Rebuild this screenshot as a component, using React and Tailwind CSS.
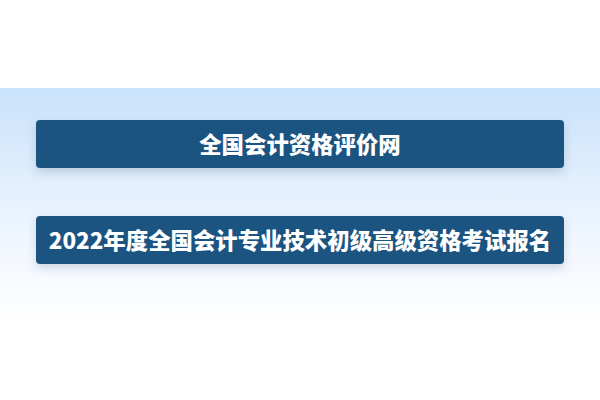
export default function App() {
  const links = [
    "全国会计资格评价网",
    "2022年度全国会计专业技术初级高级资格考试报名",
  ];

  return (
    <div
      className="w-[600px] h-[400px] bg-white overflow-hidden"
      style={{ fontFamily: '"Noto Sans CJK SC", "Noto Sans", sans-serif' }}
    >
      <div className="h-[88px]" />
      <div className="h-[312px] bg-gradient-to-b from-[#c9e2fb] via-[#f1f7fe] via-50% to-white to-75% px-[36px] pt-[32px] flex flex-col gap-[48px]">
        {links.map((label) => (
          <a
            key={label}
            href="#"
            className="h-[48px] flex items-center justify-center rounded-[4px] bg-[#1b5381] text-white font-black text-[22.4px] shadow-[0_4px_10px_rgba(30,60,100,0.18)]"
          >
            {label}
          </a>
        ))}
      </div>
    </div>
  );
}
